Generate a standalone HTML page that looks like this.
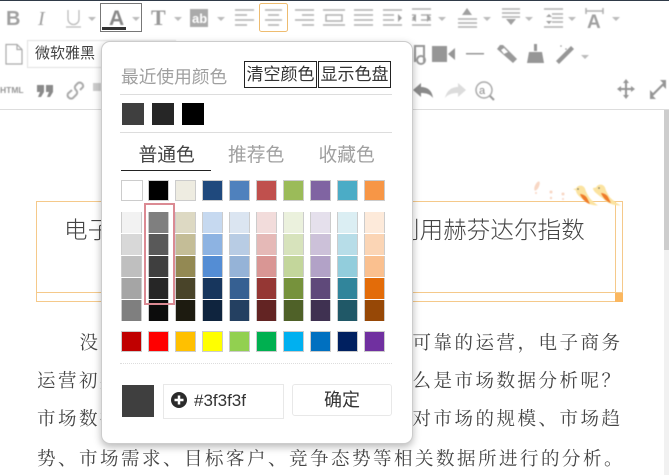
<!DOCTYPE html>
<html><head><meta charset="utf-8"><style>
*{box-sizing:border-box}
html,body{margin:0;padding:0;width:669px;height:475px;overflow:hidden;background:#fff}
body{position:relative;font-family:"Liberation Sans","Noto Sans CJK SC",sans-serif}
.a{position:absolute;white-space:nowrap}
.s{position:absolute;width:21px;height:21px;border:1px solid #ccc}
.g{position:absolute;width:21px;height:21px;border:solid #ccc;border-width:0 1px}
.b{font-family:"Liberation Serif","Noto Serif CJK SC",serif;font-size:18.5px;letter-spacing:2.5px;color:#444;line-height:24px;height:24px}
.btn{position:absolute;top:61px;width:73px;height:27px;border:1px solid #222;font-size:17px;line-height:25px;text-align:center;color:#333;background:#fff}
.lbl{color:#a0a0a0}
</style></head><body>
<div class="a" style="left:0;top:0;width:669px;height:1px;background:#2f3a48"></div>
<div class="a" style="left:0;top:109px;width:669px;height:1px;background:#ddd"></div>
<div class="a" style="left:664px;top:110px;width:5px;height:140px;background:#cdcdcd"></div>
<div class="a" style="left:664px;top:250px;width:5px;height:225px;background:#f1f1f1"></div>

<svg class="a" style="left:0;top:0;filter:blur(.4px)" width="669" height="110" viewBox="0 0 669 110">
<g fill="#a0a0a0" stroke="none">
<text x="6" y="25" font-family="Liberation Sans" font-weight="700" font-size="20">B</text>
<text x="38" y="25" font-family="Liberation Serif" font-style="italic" font-size="20">I</text>
<path d="M88 17h8l-4 4zM132 17h8l-4 4zM174 17h8l-4 4zM217 17h8l-4 4zM438 17h8l-4 4zM483 17h8l-4 4zM525 17h8l-4 4zM568 17h8l-4 4zM612 17h8l-4 4zM581 55h8l-4 4z" fill="#bbb"/>
<text x="109" y="25" font-family="Liberation Sans" font-weight="700" font-size="21" fill="#888">A</text>
<text x="151" y="25" font-family="Liberation Serif" font-weight="700" font-size="22" fill="#999">T</text>
<rect x="190" y="9" width="18" height="18" fill="#aaa"/>
<text x="192" y="23" font-family="Liberation Sans" font-weight="700" font-size="13" fill="#fff">ab</text>
</g>
<path d="M68 10v9a5.500 5.500 0 0 0 11 0v-9M66 27h15" fill="none" stroke="#bbb" stroke-width="1.300"/>
<g stroke="#b0b0b0" stroke-width="1.500" fill="none">
<path d="M235 10h19M235 15h12M235 20h19M235 25h12"/>
<path d="M265 10h17M268 15h11M265 20h17M268 25h11"/>
<path d="M295 10h19M302 15h12M295 20h19M302 25h12"/>
<path d="M323 10h22M323 25h22M326 15h16v6h-16z"/>
<path d="M354 10h19M354 15h19M354 20h19M354 25h19"/>
<path d="M383 10h19M383 15h11M383 20h11M383 25h19"/>
<path d="M412 9h19M421 15h10M421 20h10M412 25h19M412 15h3M412 20h3"/>
<path d="M458 19h19M458 23h19M458 27h19"/>
<path d="M502 9h18M502 13h18M502 17h18"/>
<path d="M544 9h19M544 27h19M552 14h11M552 18h11M552 22h11"/>
<path d="M586 11h17M586 8v6M603 8v6"/>
</g>
<g fill="#a0a0a0">
<path d="M402 18l-4-4v8zM412 18l4-4v8zM431 18l-4-4v8zM467 8l-5 7h10zM511 25l-5-6h10zM549 14l-3 3h6zM549 24l-3-3h6z"/>
<text x="587" y="28" font-family="Liberation Sans" font-weight="700" font-size="19">A</text>
</g>
<path d="M6 44.500h11l5 5v14.500h-16z M17 44.500v5h5" fill="#fff" stroke="#aaa" stroke-width="1.200"/>
<rect x="27.500" y="40.500" width="148" height="27" fill="#fff" stroke="#e0e0e0"/>
<g fill="#969696">
<path d="M414 45h11v17h-2v-15h-7v15h-2z"/>
<circle cx="421" cy="60" r="4" fill="none" stroke="#999" stroke-width="2"/>
<rect x="432" y="46" width="15" height="16"/>
<path d="M448 54l7-6v12z"/>
<rect x="466" y="53" width="18" height="1.500"/>
<path d="M503 45l14 14-4 4-16-14 3-4z" fill="#999"/>
<path d="M504 48l4 4-4 2-3-4z" fill="#fff"/>
<path d="M534 44h3v7h-3zM529 52h13l2 11h-17z"/>
<path d="M559 64l-3-3 15-15 3 3z"/>
<circle cx="561" cy="46" r=".8"/><circle cx="566" cy="49" r=".8"/>
<text x="0" y="93" font-family="Liberation Sans" font-weight="700" font-size="8.500">HTML</text>
<path d="M37 85h7v7l-3 5h-3l2-5h-3zM46 85h7v7l-3 5h-3l2-5h-3z" fill="#8a8a8a"/>
<rect x="93" y="83" width="8" height="8" fill="#ccc"/>
<path d="M413 90l8-7v4c6 0 11 3 12 11-3-4-7-5-12-5v4z" fill="#8a8a8a"/>
<path d="M466 90l-8-7v4c-6 0-11 3-13 11 3-4 8-5 13-5v4z" fill="#dcdcdc"/>
<path d="M617 89l4-3v2h4v-5h-2l3-4 3 4h-2v5h4v-2l4 3-4 3v-2h-4v5h2l-3 4-3-4h2v-5h-4v2z"/>
<path d="M650 99v-9l3 3 10-10-3-3h6v9l-3-3-10 10 3 3z"/>
</g>
<path d="M72 90l-4 3.500a3.500 3.500 0 0 0 5 4.500l3-3c2-2 1-4 0-5s-2-3 0-5l2-2a3.500 3.500 0 0 1 5 4l-3 3" fill="none" stroke="#aaa" stroke-width="2"/>
<circle cx="484" cy="90" r="8" fill="none" stroke="#aaa" stroke-width="1.500"/>
<text x="479" y="94" font-family="Liberation Sans" font-size="11" fill="#888">a</text>
<path d="M490 96l4 4" stroke="#999" stroke-width="2"/>
</svg>
<svg class="a" style="left:0;top:0" width="300" height="40" viewBox="0 0 300 40">
<rect x="100.500" y="3.500" width="41" height="28" fill="none" stroke="#777"/>
<rect x="102" y="27" width="24" height="3" fill="#333"/>
<rect x="259.500" y="3.500" width="28" height="28" rx="2" fill="none" stroke="#eebc70"/>
</svg>
<div class="a" style="left:35px;top:43px;font-size:15px;line-height:22px;color:#444">微软雅黑</div>

<!-- document -->
<div class="a" style="left:36px;top:201px;width:587px;height:101px;border:1px solid #f5c98a"></div>
<div class="a" style="left:37px;top:292px;width:585px;height:1px;background:#f5c98a"></div>
<div class="a" style="left:615px;top:202px;width:1px;height:91px;background:#f5c98a"></div>
<div class="a" style="left:615px;top:293px;width:8px;height:9px;background:#fbb75f"></div>
<svg class="a" style="left:525px;top:175px;filter:blur(.5px)" width="105" height="35" viewBox="0 0 105 35">
<g fill="#f8d7c4"><ellipse cx="12" cy="11" rx="2" ry="5" transform="rotate(25 12 11)"/><circle cx="11" cy="18" r="1"/><circle cx="26" cy="17" r="1.500"/><circle cx="26" cy="23" r="1.200"/><circle cx="38" cy="19" r="1.500"/><circle cx="38" cy="24" r="1"/></g>
<g>
<path d="M48 14l3-.5a5 5 0 0 1 9 0c1 4 3 7 5 10 3 3 5 5 8 7-6 0-12-2-15-6-4-3-7-6-7-9z" fill="#fbe3a0"/><path d="M55 19c3 0 6 2 7 4l3 6c-4-1-8-5-10-10z" fill="#ef7b2a"/>
<path d="M68 13l3-.5a5 5 0 0 1 9 0c1 4 3 7 5 10 3 3 7 6 11 8-7 0-14-2-18-7-4-3-10-7-10-10z" fill="#fbe3a0"/><path d="M76 18c3 0 6 2 7 4l3 6c-4-1-8-5-10-10z" fill="#ef7b2a"/>
</g>
<circle cx="53" cy="14" r=".8" fill="#665"/><circle cx="74" cy="13" r=".8" fill="#665"/>
</svg>
<div class="a" style="left:64px;top:214px;font-size:23.500px;letter-spacing:.2px;line-height:32px;color:#444;font-weight:300">电子</div>
<div class="a" style="left:396px;top:214px;font-size:23.500px;letter-spacing:.1px;line-height:32px;color:#444;font-weight:300">利用赫芬达尔指数</div>

<div class="a b" style="left:79.500px;top:332px">没有</div>
<div class="a b" style="left:412.500px;top:332px">可靠的运营，电子商务</div>
<div class="a b" style="left:37px;top:370px">运营初期</div>
<div class="a b" style="left:412.500px;top:370px">么是市场数据分析呢？</div>
<div class="a b" style="left:37px;top:408px">市场数据</div>
<div class="a b" style="left:412.500px;top:408px">对市场的规模、市场趋</div>
<div class="a b" style="left:37px;top:448px">势、市场需求、目标客户、竞争态势等相关数据所进行的分析。</div>

<!-- popup -->
<div class="a" style="left:101px;top:41px;width:312px;height:403px;background:#fff;border:1px solid #ccc;border-radius:9px;box-shadow:0 3px 8px rgba(0,0,0,.28)"></div>
<div class="a lbl" style="left:121px;top:65px;font-size:17.700px;line-height:24px">最近使用颜色</div>
<div class="btn" style="left:244px">清空颜色</div>
<div class="btn" style="left:318px">显示色盘</div>
<div class="a" style="left:120px;top:94px;width:272px;height:1px;background:#ddd"></div>
<div class="a" style="left:122px;top:103px;width:22px;height:22px;background:#3f3f3f"></div>
<div class="a" style="left:152px;top:103px;width:22px;height:22px;background:#262626"></div>
<div class="a" style="left:182px;top:103px;width:22px;height:22px;background:#000"></div>
<div class="a" style="left:120px;top:132px;width:272px;height:1px;background:#ddd"></div>
<div class="a" style="left:138.500px;top:142px;font-size:18.800px;line-height:26px;color:#444">普通色</div>
<div class="a lbl" style="left:228px;top:142px;font-size:18.800px;line-height:26px">推荐色</div>
<div class="a lbl" style="left:318.500px;top:142px;font-size:18.800px;line-height:26px">收藏色</div>
<div class="a" style="left:121px;top:170px;width:90px;height:1px;background:#222"></div>

<!-- theme row -->
<div class="s" style="left:121px;top:180px;background:#fff;width:22px"></div>
<div class="s" style="left:148px;top:180px;background:#000"></div>
<div class="s" style="left:175px;top:180px;background:#eeece1"></div>
<div class="s" style="left:202px;top:180px;background:#1f497d"></div>
<div class="s" style="left:229px;top:180px;background:#4f81bd"></div>
<div class="s" style="left:256px;top:180px;background:#c0504d"></div>
<div class="s" style="left:283px;top:180px;background:#9bbb59"></div>
<div class="s" style="left:310px;top:180px;background:#8064a2"></div>
<div class="s" style="left:337px;top:180px;background:#4bacc6"></div>
<div class="s" style="left:364px;top:180px;background:#f79646"></div>

<!-- shades -->
<div class="g" style="left:121px;top:212px;background:#f2f2f2"></div>
<div class="g" style="left:121px;top:234px;background:#d8d8d8"></div>
<div class="g" style="left:121px;top:256px;background:#bfbfbf"></div>
<div class="g" style="left:121px;top:278px;background:#a5a5a5"></div>
<div class="g" style="left:121px;top:300px;background:#7f7f7f"></div>
<div class="g" style="left:148px;top:212px;background:#7f7f7f"></div>
<div class="g" style="left:148px;top:234px;background:#595959"></div>
<div class="g" style="left:148px;top:256px;background:#3f3f3f"></div>
<div class="g" style="left:148px;top:278px;background:#262626"></div>
<div class="g" style="left:148px;top:300px;background:#0c0c0c"></div>
<div class="g" style="left:175px;top:212px;background:#ddd9c3"></div>
<div class="g" style="left:175px;top:234px;background:#c4bd97"></div>
<div class="g" style="left:175px;top:256px;background:#938953"></div>
<div class="g" style="left:175px;top:278px;background:#494429"></div>
<div class="g" style="left:175px;top:300px;background:#1d1b10"></div>
<div class="g" style="left:202px;top:212px;background:#c6d9f0"></div>
<div class="g" style="left:202px;top:234px;background:#8db3e2"></div>
<div class="g" style="left:202px;top:256px;background:#548dd4"></div>
<div class="g" style="left:202px;top:278px;background:#17365d"></div>
<div class="g" style="left:202px;top:300px;background:#0f243e"></div>
<div class="g" style="left:229px;top:212px;background:#dbe5f1"></div>
<div class="g" style="left:229px;top:234px;background:#b8cce4"></div>
<div class="g" style="left:229px;top:256px;background:#95b3d7"></div>
<div class="g" style="left:229px;top:278px;background:#366092"></div>
<div class="g" style="left:229px;top:300px;background:#244061"></div>
<div class="g" style="left:256px;top:212px;background:#f2dcdb"></div>
<div class="g" style="left:256px;top:234px;background:#e5b9b7"></div>
<div class="g" style="left:256px;top:256px;background:#d99694"></div>
<div class="g" style="left:256px;top:278px;background:#953734"></div>
<div class="g" style="left:256px;top:300px;background:#632423"></div>
<div class="g" style="left:283px;top:212px;background:#ebf1dd"></div>
<div class="g" style="left:283px;top:234px;background:#d7e3bc"></div>
<div class="g" style="left:283px;top:256px;background:#c3d69b"></div>
<div class="g" style="left:283px;top:278px;background:#76923c"></div>
<div class="g" style="left:283px;top:300px;background:#4f6128"></div>
<div class="g" style="left:310px;top:212px;background:#e5e0ec"></div>
<div class="g" style="left:310px;top:234px;background:#ccc1d9"></div>
<div class="g" style="left:310px;top:256px;background:#b2a2c7"></div>
<div class="g" style="left:310px;top:278px;background:#5f497a"></div>
<div class="g" style="left:310px;top:300px;background:#3f3151"></div>
<div class="g" style="left:337px;top:212px;background:#dbeef3"></div>
<div class="g" style="left:337px;top:234px;background:#b7dde8"></div>
<div class="g" style="left:337px;top:256px;background:#92cddc"></div>
<div class="g" style="left:337px;top:278px;background:#31859b"></div>
<div class="g" style="left:337px;top:300px;background:#205867"></div>
<div class="g" style="left:364px;top:212px;background:#fdeada"></div>
<div class="g" style="left:364px;top:234px;background:#fbd5b5"></div>
<div class="g" style="left:364px;top:256px;background:#fac08f"></div>
<div class="g" style="left:364px;top:278px;background:#e36c09"></div>
<div class="g" style="left:364px;top:300px;background:#974806"></div>
<div class="a" style="left:144px;top:203px;width:31px;height:102px;border:2px solid #db8a93"></div>

<!-- standard row -->
<div class="s" style="left:121px;top:331px;background:#c00000"></div>
<div class="s" style="left:148px;top:331px;background:#f00"></div>
<div class="s" style="left:175px;top:331px;background:#ffc000"></div>
<div class="s" style="left:202px;top:331px;background:#ff0"></div>
<div class="s" style="left:229px;top:331px;background:#92d050"></div>
<div class="s" style="left:256px;top:331px;background:#00b050"></div>
<div class="s" style="left:283px;top:331px;background:#00b0f0"></div>
<div class="s" style="left:310px;top:331px;background:#0070c0"></div>
<div class="s" style="left:337px;top:331px;background:#002060"></div>
<div class="s" style="left:364px;top:331px;background:#7030a0"></div>

<div class="a" style="left:120px;top:363px;width:272px;height:0;border-top:1px dotted #ddd"></div>
<div class="a" style="left:122px;top:385px;width:32px;height:32px;background:#3f3f3f"></div>
<div class="a" style="left:163px;top:384px;width:121px;height:35px;border:1px solid #e8e8e8"></div>
<svg class="a" style="left:171px;top:392px" width="16" height="16" viewBox="0 0 16 16"><circle cx="8" cy="8" r="8" fill="#2b2b2b"/><path d="M8 3.500v9M3.500 8h9" stroke="#fff" stroke-width="2.500"/></svg>
<div class="a" style="left:194px;top:390px;font-size:17px;line-height:22px;color:#333">#3f3f3f</div>
<div class="a" style="left:292px;top:384px;width:100px;height:32px;border:1px solid #e8e8e8;border-radius:3px;font-size:18px;line-height:30px;text-align:center;color:#333">确定</div>
</body></html>
